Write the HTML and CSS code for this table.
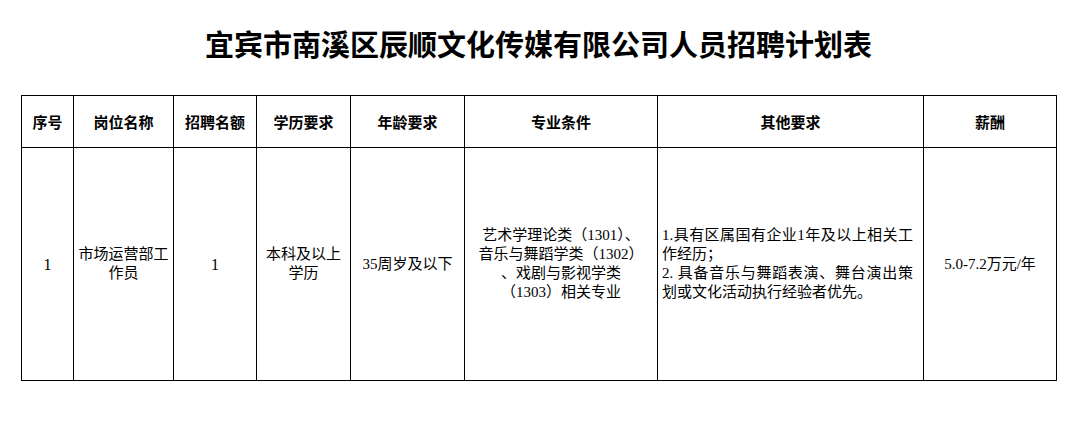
FILE: index.html
```html
<!DOCTYPE html>
<html lang="zh-CN">
<head>
<meta charset="utf-8">
<link rel="stylesheet" href="styles.css">
</head>
<body>
<div class="page">
  <h1 class="title">宜宾市南溪区辰顺文化传媒有限公司人员招聘计划表</h1>
  <table class="plan">
    <colgroup>
      <col class="c1"><col class="c2"><col class="c3"><col class="c4">
      <col class="c5"><col class="c6"><col class="c7"><col class="c8">
    </colgroup>
    <thead>
      <tr class="head">
        <th>序号</th><th>岗位名称</th><th>招聘名额</th><th>学历要求</th>
        <th>年龄要求</th><th>专业条件</th><th>其他要求</th><th>薪酬</th>
      </tr>
    </thead>
    <tbody>
      <tr class="row">
        <td class="num">1</td>
        <td>市场运营部工作员</td>
        <td class="num">1</td>
        <td>本科及以上学历</td>
        <td>35周岁及以下</td>
        <td class="major">艺术学理论类（1301）、<br>音乐与舞蹈学类（1302）<br>、戏剧与影视学类<br>（1303）相关专业</td>
        <td class="other"><p>1.具有区属国有企业1年及以上相关工作经历；</p><p>2. 具备音乐与舞蹈表演、舞台演出策划或文化活动执行经验者优先。</p></td>
        <td>5.0-7.2万元/年</td>
      </tr>
    </tbody>
  </table>
</div>
</body>
</html>
```

FILE: styles.css
```css
html, body {
  margin: 0;
  padding: 0;
  background: #fff;
}
.page {
  padding: 0 0 0 21px;
  font-family: "Liberation Serif", "Noto Sans CJK SC", serif;
  color: #000;
}
.title {
  margin: 0;
  padding-top: 23px;
  height: 40px;
  margin-bottom: 32px;
  width: 1035px;
  text-align: center;
  font-family: "Noto Sans CJK SC", sans-serif;
  font-weight: 700;
  font-size: 29px;
  line-height: 40px;
  letter-spacing: 0;
}
.plan {
  border-collapse: collapse;
  table-layout: fixed;
  width: 1035px;
}
.c1 { width: 52px; }
.c2 { width: 100px; }
.c3 { width: 83px; }
.c4 { width: 94px; }
.c5 { width: 114px; }
.c6 { width: 193px; }
.c7 { width: 266px; }
.c8 { width: 133px; }
.plan th, .plan td {
  border: 1px solid #000;
  padding: 0 3px;
  text-align: center;
  vertical-align: middle;
}
.plan th {
  font-family: "Noto Sans CJK SC", sans-serif;
  font-weight: 700;
  font-size: 15px;
  line-height: 20px;
}
.head { height: 52px; }
.row { height: 233px; }
.plan td {
  font-size: 15px;
  line-height: 19px;
}
.plan td.num {
  font-size: 16px;
}
.plan td.other {
  text-align: justify;
  padding: 0 10px 0 4px;
}
.other p {
  margin: 0;
  text-align: justify;
}
```
